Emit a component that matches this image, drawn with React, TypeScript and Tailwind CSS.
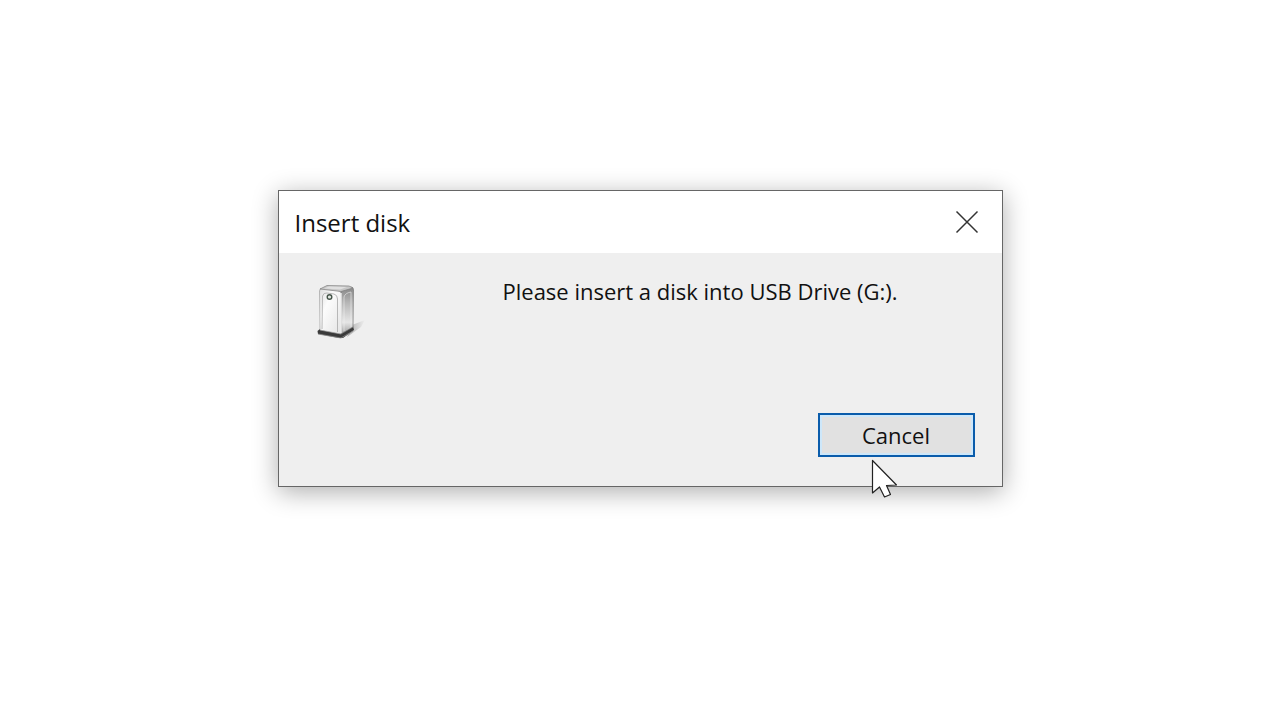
import React from 'react';

const App: React.FC = () => {
  return (
    <main className="min-h-screen bg-white flex items-center justify-center px-4 pb-11 font-['Open_Sans',sans-serif] text-black">
      <section
        role="dialog"
        aria-labelledby="dialog-title"
        aria-describedby="dialog-message"
        className="w-full max-w-[725px] border border-[#666666] bg-[#efefef] shadow-[0_5px_24px_rgba(0,0,0,0.32)]"
      >
        {/* Title bar */}
        <header className="flex items-center justify-between h-[62px] bg-white pl-4 pr-[19px]">
          <h1 id="dialog-title" className="pt-0.5 text-[24px] leading-8 text-[#111111]">Insert disk</h1>
          <button type="button" aria-label="Close" className="flex items-center justify-center w-8 h-8">
            <CloseIcon className="w-6 h-6" />
          </button>
        </header>

        {/* Message */}
        <div className="flex items-start pl-9 pr-7 pt-6">
          <DriveIcon className="w-14 h-16 shrink-0" />
          <p id="dialog-message" className="ml-[132px] text-[22px] leading-7 text-[#111111]">
            Please insert a disk into USB Drive (G:).
          </p>
        </div>

        {/* Actions */}
        <footer className="flex justify-end pl-9 pr-[27px] pt-[72px] pb-[29px]">
          <div className="relative">
            <button
              type="button"
              className="flex items-center justify-center w-[157px] h-11 border-2 border-[#0a5cab] bg-[#e1e1e1] text-[22px] leading-8 text-[#111111] inset-ring-2 inset-ring-[#cde7fa]"
            >
              Cancel
            </button>
            <Pointer className="absolute left-[53px] top-[46px] w-7 h-10" />
          </div>
        </footer>
      </section>
    </main>
  );
};

interface IconProps {
  className?: string;
}

const CloseIcon: React.FC<IconProps> = ({ className }) => (
  <svg viewBox="0 0 24 24" className={className} fill="none" stroke="#333333" strokeWidth="1.5" aria-hidden="true">
    <path d="M1.5 1.5 L22.5 22.5 M22.5 1.5 L1.5 22.5" />
  </svg>
);

const DriveIcon: React.FC<IconProps> = ({ className }) => (
  <svg viewBox="0 0 56 64" className={className} aria-hidden="true">
    <defs>
      <linearGradient id="front" x1="0" y1="0" x2="1" y2="1">
        <stop offset="0" stopColor="#dcdcdc" />
        <stop offset="0.35" stopColor="#fcfcfc" />
        <stop offset="1" stopColor="#e4e4e4" />
      </linearGradient>
      <linearGradient id="side" x1="0" y1="0" x2="0" y2="1">
        <stop offset="0" stopColor="#858585" />
        <stop offset="0.35" stopColor="#b8b8b8" />
        <stop offset="0.75" stopColor="#e6e6e6" />
        <stop offset="1" stopColor="#a0a0a0" />
      </linearGradient>
      <linearGradient id="floor" x1="0" y1="0" x2="1" y2="0">
        <stop offset="0" stopColor="#8d8d8d" />
        <stop offset="1" stopColor="#8d8d8d" stopOpacity="0" />
      </linearGradient>
    </defs>
    {/* Cast shadow and base */}
    <path d="M37 48 L50 43 L46 50 L32 60 Z" fill="url(#floor)" opacity="0.7" />
    <path d="M2.5 54 L6 51 L38 49 L39 53 L28 61 L24 61 L3 57 Z" fill="#3a3a3a" />
    <path d="M3 57 L26 61 L38 54" fill="none" stroke="#888888" strokeWidth="0.8" />
    {/* Case */}
    <path d="M26 14 L36 10 Q38.5 10 38.5 13 L38 50 L26 57 Z" fill="url(#side)" stroke="#777777" strokeWidth="0.7" />
    <path d="M4.5 14 Q4.5 11 7.5 11.5 L23 13.5 Q26 14 26 17 L26 57 L5 53 Z" fill="url(#front)" stroke="#a0a0a0" strokeWidth="0.7" />
    <path d="M5 12 L12 8.5 L34 9 L38 11 L26 14.5 Z" fill="#c6c6c6" stroke="#808080" strokeWidth="0.7" />
    <path d="M9 11.5 L14 9.5 L32 10 L25 12.5 Z" fill="#e0e0e0" />
    {/* Panel seams */}
    <path d="M7 52 L7.5 19 Q8.5 15.5 12 16 L19 17 Q22.5 18 22.5 22 L22.5 55" fill="none" stroke="#b0b0b0" strokeWidth="0.9" />
    <path d="M29 54 L29 20 Q30 16 36 15 L36 50" fill="none" stroke="#f2f2f2" strokeWidth="0.8" opacity="0.7" />
    <path d="M26 16 L26 56" stroke="#ffffff" strokeWidth="1.2" />
    <circle cx="14.5" cy="20" r="2.3" fill="#e4e9e4" stroke="#46554a" strokeWidth="1.4" />
  </svg>
);

const Pointer: React.FC<IconProps> = ({ className }) => (
  <svg viewBox="0 0 28 40" className={`${className} pointer-events-none`} aria-hidden="true">
    <path
      d="M1.5 1.5 L1.5 34 L8.5 28 L13.5 38 L19.5 35.5 L15.5 26.5 L25.5 26 Z"
      fill="#ffffff"
      stroke="#222222"
      strokeWidth="1.2"
      strokeLinejoin="round"
    />
  </svg>
);

export default App;
